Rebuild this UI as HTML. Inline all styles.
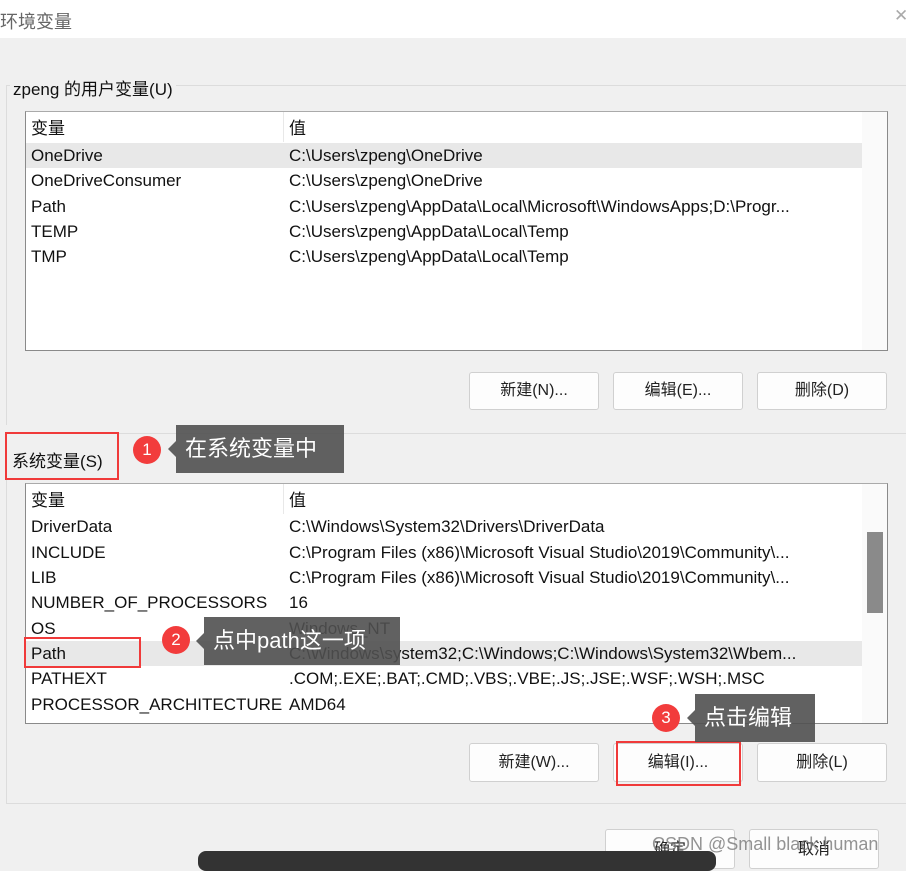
<!DOCTYPE html>
<html><head><meta charset="utf-8"><style>
*{margin:0;padding:0;box-sizing:border-box}
body{width:906px;height:862px;background:#f0f0f0;position:relative;overflow:hidden;font-family:"Liberation Sans","Noto Sans CJK SC",sans-serif;color:#111;font-size:17px}
.a{position:absolute;white-space:nowrap}
.t{letter-spacing:0}
.list{position:absolute;background:#fff;border:1px solid #8a8a8a;border-top-color:#aaa;overflow:hidden}
.row{position:absolute;left:0;height:25px;line-height:25px;white-space:nowrap;overflow:hidden}
.btn{position:absolute;background:#fdfdfd;border:1px solid #d0d0d0;border-radius:3px;text-align:center;font-size:16px;color:#222}
.red{position:absolute;border:2px solid #f03a3a}
.circ{position:absolute;width:28px;height:28px;border-radius:50%;background:#f23c3c;color:#fff;text-align:center;line-height:28px;font-size:17px}
.tip{position:absolute;background:rgba(80,80,80,0.9);color:#fff;font-size:22px;padding-left:9px}
.tip:before{content:"";position:absolute;left:-8px;top:50%;margin-top:-8px;border:8px solid transparent;border-left:0;border-right-color:rgba(80,80,80,0.9)}
</style></head><body>
<div class="a" style="left:0;top:0;width:906px;height:38px;background:#fff"></div>
<div class="a" style="left:0;top:8px;font-size:18px;color:#666">环境变量</div>
<div class="a" style="left:894px;top:6px;font-size:17px;color:#aaa">✕</div>

<div class="a" style="left:6px;top:85px;width:900px;height:1px;background:#dcdcdc"></div>
<div class="a" style="left:6px;top:85px;width:1px;height:340px;background:#dcdcdc"></div>
<div class="a t" style="left:10px;top:75px;background:#f0f0f0;padding:0 3px;font-size:17px">zpeng 的用户变量(U)</div>

<div class="list" style="left:25px;top:111px;width:863px;height:240px">
 <div class="a" style="left:836px;top:0;width:27px;height:240px;background:#fafafa"></div>
 <div class="a" style="left:257px;top:0;width:1px;height:30px;background:#e8e8e8"></div>
 <div class="row t" style="top:4px;left:5px">变量</div><div class="row t" style="top:4px;left:263px">值</div>
 <div class="a" style="left:0;top:31px;width:836px;height:25px;background:#e8e8e8"></div>
 <div class="row t" style="top:31px;left:5px">OneDrive</div><div class="row t" style="top:31px;left:263px">C:\Users\zpeng\OneDrive</div>
 <div class="row t" style="top:56px;left:5px">OneDriveConsumer</div><div class="row t" style="top:56px;left:263px">C:\Users\zpeng\OneDrive</div>
 <div class="row t" style="top:82px;left:5px">Path</div><div class="row t" style="top:82px;left:263px;width:570px">C:\Users\zpeng\AppData\Local\Microsoft\WindowsApps;D:\Progr...</div>
 <div class="row t" style="top:107px;left:5px">TEMP</div><div class="row t" style="top:107px;left:263px">C:\Users\zpeng\AppData\Local\Temp</div>
 <div class="row t" style="top:132px;left:5px">TMP</div><div class="row t" style="top:132px;left:263px">C:\Users\zpeng\AppData\Local\Temp</div>
</div>
<div class="btn" style="left:469px;top:372px;width:130px;height:38px;line-height:36px">新建(N)...</div>
<div class="btn" style="left:613px;top:372px;width:130px;height:38px;line-height:36px">编辑(E)...</div>
<div class="btn" style="left:757px;top:372px;width:130px;height:38px;line-height:36px">删除(D)</div>

<div class="a" style="left:6px;top:433px;width:900px;height:1px;background:#dcdcdc"></div>
<div class="a" style="left:6px;top:433px;width:1px;height:370px;background:#dcdcdc"></div>
<div class="a" style="left:6px;top:803px;width:900px;height:1px;background:#dcdcdc"></div>
<div class="a" style="left:7px;top:434px;width:110px;height:44px;background:#f0f0f0"></div>
<div class="a t" style="left:12px;top:447px;font-size:17px">系统变量(S)</div>
<div class="red" style="left:5px;top:432px;width:114px;height:48px"></div>

<div class="list" style="left:25px;top:483px;width:863px;height:241px">
 <div class="a" style="left:836px;top:0;width:27px;height:241px;background:#fafafa"></div>
 <div class="a" style="left:841px;top:48px;width:16px;height:81px;background:#8a8a8a"></div>
 <div class="a" style="left:257px;top:0;width:1px;height:30px;background:#e8e8e8"></div>
 <div class="row t" style="top:4px;left:5px">变量</div><div class="row t" style="top:4px;left:263px">值</div>
 <div class="row t" style="top:30px;left:5px">DriverData</div><div class="row t" style="top:30px;left:263px">C:\Windows\System32\Drivers\DriverData</div>
 <div class="row t" style="top:56px;left:5px">INCLUDE</div><div class="row t" style="top:56px;left:263px;width:570px">C:\Program Files (x86)\Microsoft Visual Studio\2019\Community\...</div>
 <div class="row t" style="top:81px;left:5px">LIB</div><div class="row t" style="top:81px;left:263px;width:570px">C:\Program Files (x86)\Microsoft Visual Studio\2019\Community\...</div>
 <div class="row t" style="top:106px;left:5px">NUMBER_OF_PROCESSORS</div><div class="row t" style="top:106px;left:263px">16</div>
 <div class="row t" style="top:132px;left:5px">OS</div><div class="row t" style="top:132px;left:263px">Windows_NT</div>
 <div class="a" style="left:0;top:157px;width:836px;height:25px;background:#e8e8e8"></div>
 <div class="row t" style="top:157px;left:5px">Path</div><div class="row t" style="top:157px;left:263px;width:570px">C:\Windows\system32;C:\Windows;C:\Windows\System32\Wbem...</div>
 <div class="row t" style="top:182px;left:5px">PATHEXT</div><div class="row t" style="top:182px;left:263px">.COM;.EXE;.BAT;.CMD;.VBS;.VBE;.JS;.JSE;.WSF;.WSH;.MSC</div>
 <div class="row t" style="top:208px;left:5px">PROCESSOR_ARCHITECTURE</div><div class="row t" style="top:208px;left:263px">AMD64</div>
</div>
<div class="red" style="left:24px;top:637px;width:117px;height:31px"></div>

<div class="btn" style="left:469px;top:743px;width:130px;height:39px;line-height:37px">新建(W)...</div>
<div class="btn" style="left:613px;top:743px;width:130px;height:39px;line-height:37px">编辑(I)...</div>
<div class="btn" style="left:757px;top:743px;width:130px;height:39px;line-height:37px">删除(L)</div>
<div class="red" style="left:616px;top:741px;width:125px;height:45px"></div>

<div class="btn" style="left:605px;top:829px;width:130px;height:40px;line-height:40px">确定</div>
<div class="btn" style="left:749px;top:829px;width:130px;height:40px;line-height:40px">取消</div>
<div class="a" style="left:652px;top:834px;font-size:18px;color:rgba(120,120,120,0.8)">CSDN @Small black human</div>
<div class="a" style="left:198px;top:851px;width:518px;height:20px;background:#333;border-radius:8px"></div>

<div class="circ" style="left:133px;top:436px">1</div>
<div class="tip" style="left:176px;top:425px;width:168px;height:48px;line-height:48px">在系统变量中</div>
<div class="circ" style="left:162px;top:626px">2</div>
<div class="tip" style="left:204px;top:617px;width:196px;height:48px;line-height:48px">点中path这一项</div>
<div class="circ" style="left:652px;top:704px">3</div>
<div class="tip" style="left:695px;top:694px;width:120px;height:48px;line-height:48px">点击编辑</div>
</body></html>
